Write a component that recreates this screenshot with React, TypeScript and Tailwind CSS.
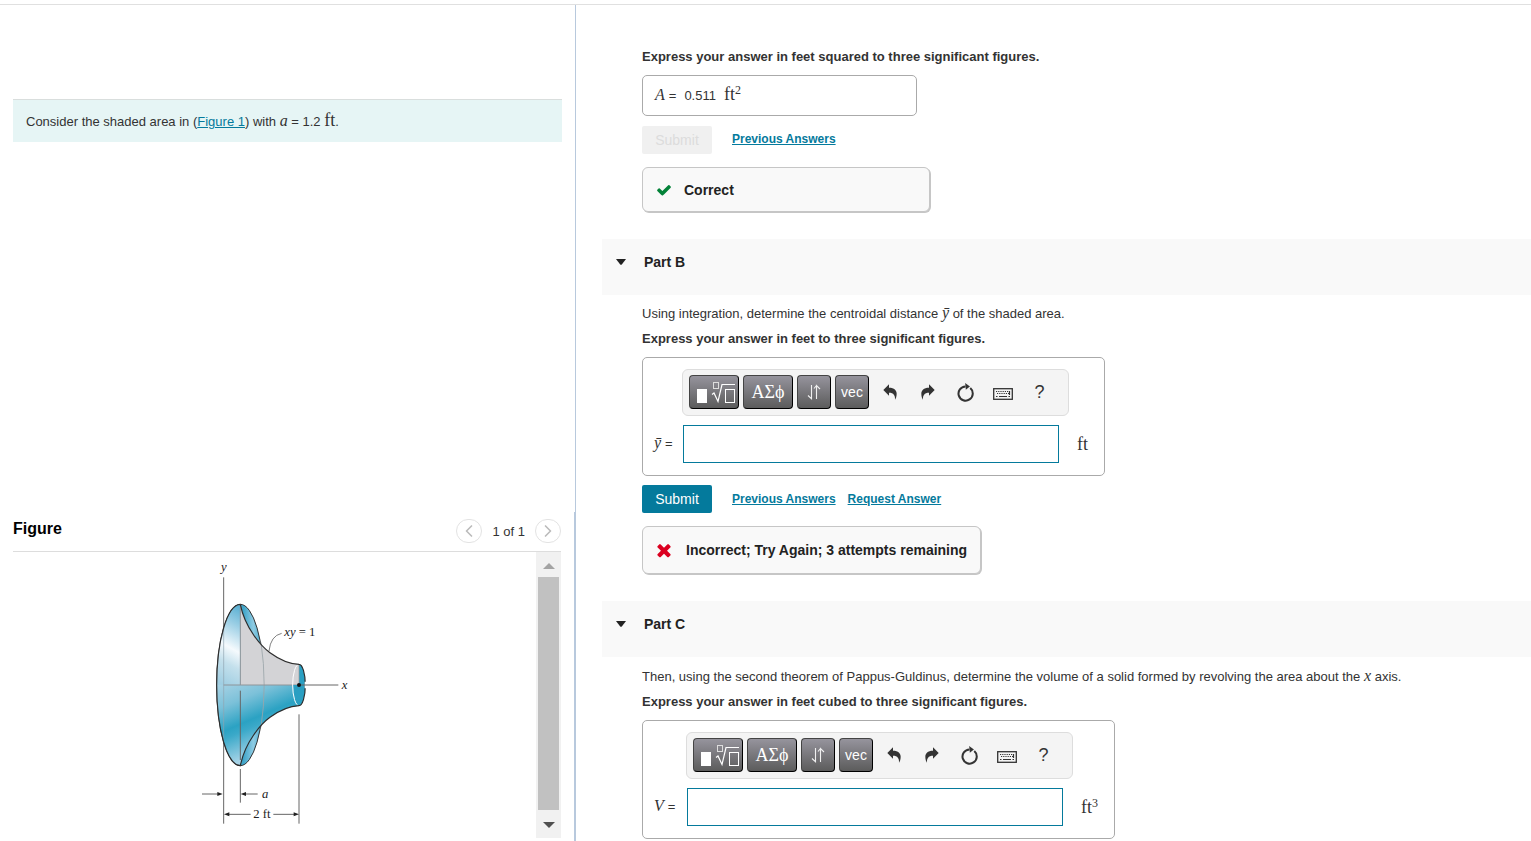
import React, { useState } from 'react';
import { ChevronLeft, ChevronRight } from 'lucide-react';

const linkClass = 'text-[#047a9c] underline';
const mathClass = "font-['Liberation_Serif',serif]";

function CheckIcon() {
  return (
    <svg viewBox="0 0 1792 1792" className="w-4 h-4 fill-[#038238]" aria-hidden="true">
      <path d="M1671 566q0 40-28 68l-724 724-136 136q-28 28-68 28t-68-28l-136-136-362-362q-28-28-28-68t28-68l136-136q28-28 68-28t68 28l294 295 656-657q28-28 68-28t68 28l136 136q28 28 28 68z" />
    </svg>
  );
}

function CrossIcon() {
  return (
    <svg viewBox="0 0 1792 1792" className="w-5 h-5 fill-[#db0020]" aria-hidden="true">
      <path d="M1490 1322q0 40-28 68l-136 136q-28 28-68 28t-68-28l-294-294-294 294q-28 28-68 28t-68-28l-136-136q-28-28-28-68t28-68l294-294-294-294q-28-28-28-68t28-68l136-136q28-28 68-28t68 28l294 294 294-294q28-28 68-28t68 28l136 136q28 28 28 68t-28 68l-294 294 294 294q28 28 28 68z" />
    </svg>
  );
}

function TemplateIcon() {
  return (
    <svg viewBox="0 0 38 24" className="w-[38px] h-6" fill="none" stroke="white" aria-hidden="true">
      <rect x="0" y="9" width="10" height="14" fill="white" stroke="none" />
      <rect x="16.5" y="2.5" width="5" height="6" stroke="#ddd" />
      <path d="M15 14.5l2-1.5 4 8.5 4-17h13" strokeWidth="1.2" />
      <rect x="28.5" y="9.5" width="9" height="13" />
    </svg>
  );
}

function ArrowsIcon() {
  return (
    <svg viewBox="0 0 14 16" className="w-3.5 h-4" fill="none" stroke="#f0f0f0" strokeWidth="1.1" aria-hidden="true">
      <path d="M4.5 1v13.5M1 11.5l3.5 3.2V12M9.5 15V1.5M9.5 4V1.5L13 5M9.5 1.5L7 4.5" />
    </svg>
  );
}

function UndoIcon({ flip = false }: { flip?: boolean }) {
  return (
    <svg viewBox="0 0 42 48" className={`w-3.5 h-4 fill-[#333] ${flip ? '-scale-x-100' : ''}`} aria-hidden="true">
      <path d="M1 18L18 1v10c16 0 23 8 23 18 0 8-2 13-5 18 1-13-4-21-18-21v9z" />
    </svg>
  );
}

function ResetIcon() {
  return (
    <svg viewBox="0 0 50 56" className="w-[17px] h-[19px]" aria-hidden="true">
      <path d="M39 15A21 21 0 1 1 25 10" fill="none" stroke="#333" strokeWidth="6" />
      <path d="M24 0l14 10-12 10z" fill="#333" />
    </svg>
  );
}

function KeyboardIcon() {
  return (
    <svg viewBox="0 0 20 12" className="w-5 h-3" fill="none" stroke="#333" aria-hidden="true">
      <rect x="0.7" y="0.7" width="18.6" height="10.6" strokeWidth="1.3" />
      <path d="M3 3.5h14M4 5.5h12" strokeDasharray="1.2 1" />
      <path d="M3 8.5h1.5M6 8.5h8M15.5 8.5h1.5M16.5 3v4" strokeWidth="1.2" />
    </svg>
  );
}

const darkButton =
  'h-[34px] flex items-center justify-center rounded border border-r-black border-b-black border-t-[#444] border-l-[#444] bg-linear-to-b from-[#96949d] to-[#5c5c5c] text-white';
const iconButton = 'h-[34px] flex items-center justify-center text-[#333]';

function Toolbar() {
  return (
    <div className="w-[387px] h-[47px] flex gap-1 px-1.5 pt-[5px] rounded-md border border-[#ddd] bg-[#f4f4f4]">
      <button className={`${darkButton} w-[50px] pl-[3px]`} aria-label="Templates"><TemplateIcon /></button>
      <button className={`${darkButton} ${mathClass} w-[50px] text-lg`}>ΑΣϕ</button>
      <button className={`${darkButton} w-[34px]`} aria-label="Subscript and superscript"><ArrowsIcon /></button>
      <button className={`${darkButton} w-[34px] text-sm`}>vec</button>
      <button className={`${iconButton} w-[34px]`} aria-label="Undo"><UndoIcon /></button>
      <button className={`${iconButton} w-[34px]`} aria-label="Redo"><UndoIcon flip /></button>
      <button className={`${iconButton} w-[33px]`} aria-label="Reset"><ResetIcon /></button>
      <button className={`${iconButton} w-[33px] pt-1`} aria-label="Keyboard shortcuts"><KeyboardIcon /></button>
      <button className={`${iconButton} w-[33px] text-lg`}>?</button>
    </div>
  );
}

type AnswerFormProps = {
  id: string;
  symbol: string;
  labelClass: string;
  unit: React.ReactNode;
};

function AnswerForm({ id, symbol, labelClass, unit }: AnswerFormProps) {
  const [value, setValue] = useState('');

  return (
    <div className="w-fit mt-[9px] pl-[11px] pr-4 pt-[11px] pb-3 rounded-[5px] border border-[#aaa]">
      <div className="flex">
        <div className={labelClass} />
        <Toolbar />
      </div>
      <div className="flex items-center mt-[9px]">
        <label htmlFor={id} className={`${labelClass} flex items-baseline gap-1 text-[13px]`}>
          <i className={`${mathClass} text-base leading-none`}>{symbol}</i>=
        </label>
        <input
          id={id}
          type="text"
          value={value}
          onChange={(e) => setValue(e.target.value)}
          className="w-[376px] h-[38px] ml-px px-2 border border-[#047a9c] bg-white outline-none"
        />
        <span className={`${mathClass} ml-[18px] text-lg leading-none`}>{unit}</span>
      </div>
    </div>
  );
}

function PartHeader({ title }: { title: string }) {
  return (
    <button className="w-full h-14 mt-[27px] flex items-start gap-[18px] pl-3.5 pt-3.5 bg-[#f9f9f9] text-sm leading-[18px] font-bold text-[#222]">
      <svg viewBox="0 0 10 6" className="w-2.5 h-1.5 mt-1.5 fill-[#222]" aria-hidden="true">
        <path d="M0 0h10L6 5.3q-1 1-2 0z" />
      </svg>
      {title}
    </button>
  );
}

const feedbackClass =
  'flex items-center mt-[13px] rounded-md border border-[#c6c6c6] bg-[#f9f9f9] shadow-[1px_1px_0_0_#c6c6c6] text-sm font-bold text-[#222]';

function FunnelFigure() {
  const thin = { stroke: '#666', strokeWidth: 3 };
  return (
    <svg viewBox="27 0 453 840" className="w-[151px] h-[280px] mx-auto mt-[3px]" role="img" aria-label="Solid of revolution for xy = 1">
      <defs>
        <linearGradient id="disk" x1="150" y1="160" x2="30" y2="380" gradientUnits="userSpaceOnUse">
          <stop offset="0" stopColor="#5fb2d4" />
          <stop offset="0.2" stopColor="#9ccfe5" />
          <stop offset="0.47" stopColor="#f5fafd" />
          <stop offset="0.65" stopColor="#c4e0ec" />
          <stop offset="0.9" stopColor="#a0cee2" />
        </linearGradient>
        <linearGradient id="lower" x1="130" y1="320" x2="240" y2="580" gradientUnits="userSpaceOnUse">
          <stop offset="0.15" stopColor="#a9d3e5" />
          <stop offset="0.4" stopColor="#7cc1d9" />
          <stop offset="0.64" stopColor="#2ba2c3" />
          <stop offset="0.72" stopColor="#3ba9c9" />
          <stop offset="1" stopColor="#a6d3e7" />
        </linearGradient>
        <linearGradient id="back" x1="160" y1="0" x2="220" y2="0" gradientUnits="userSpaceOnUse">
          <stop offset="0" stopColor="#3fa5c9" />
          <stop offset="0.5" stopColor="#8ecbe3" />
          <stop offset="1" stopColor="#3fa5c9" />
        </linearGradient>
      </defs>

      {/* flared end and body */}
      <path d="M101 67V806" {...thin} />
      <ellipse cx="151" cy="390" rx="71" ry="242" fill="url(#back)" stroke="#333" strokeWidth="3" />
      <path d="M151 148A71 242 0 0 0 80 390H151z" fill="url(#disk)" />
      <path d="M80 390A71 242 0 0 0 151 632C165 560 215 505 240 487Q285 454 327 452V390z" fill="url(#lower)" />
      <path d="M151 148C165 220 215 275 240 293Q285 326 327 328V390H151z" fill="#d3d3d6" />
      <path d="M101 218V555" stroke="#8fa5b0" strokeWidth="2" />
      <path d="M213 262Q232 390 213 517" fill="none" stroke="#9aa5aa" strokeWidth="2.5" />
      <path d="M151 150V390M101 390H327" fill="none" stroke="#8e9499" strokeWidth="3" />

      {/* narrow end */}
      <path d="M327 328A19 62 0 0 1 327 452z" fill="#2a9fc2" />
      <path d="M327 390H309A19 62 0 0 0 327 452z" fill="#2a9fc2" />
      <path d="M327 328A19 62 0 0 0 327 452" fill="none" stroke="#fff" strokeWidth="3" />
      <path d="M327 328V390" stroke="#999" strokeWidth="2" />
      <path d="M151 148A71 242 0 0 0 151 632C165 560 215 505 240 487Q285 454 327 452A19 62 0 0 0 327 328Q285 326 240 293C215 275 165 220 151 148" fill="none" stroke="#2d2d2d" strokeWidth="3.5" />
      <path d="M346 380V400" stroke="#fff" strokeWidth="4" />
      <path d="M327 390H445" {...thin} />
      <circle cx="327" cy="390" r="6" fill="#111" />

      {/* curve leader and dimensions */}
      <path d="M237 288Q242 242 275 235" fill="none" {...thin} strokeWidth="2.5" />
      <path d="M151 407V615M151 642V743M327 478V806" {...thin} />
      <path d="M36 717H88M160 717H203M112 778H182M250 778H318" {...thin} />
      <path d="M98 717l-16-6v12zM152 717l16-6v12zM102 778l16-6v12zM327 778l-16-6v12z" fill="#222" />

      <g className="font-['Liberation_Serif',serif]" fill="#222" fontSize="38">
        <text x="93" y="49" fontStyle="italic">y</text>
        <text x="455" y="401" fontStyle="italic">x</text>
        <text x="283" y="242"><tspan fontStyle="italic">xy</tspan> = 1</text>
        <text x="216" y="729" fontStyle="italic">a</text>
        <text x="190" y="788">2 ft</text>
      </g>
    </svg>
  );
}

function FigurePanel() {
  const pager = 'w-[26px] h-6 flex items-center justify-center rounded-full border border-[#e3e3e3] text-[#bbb]';
  return (
    <section className="mt-auto pr-[13px] pb-[3px] border-r border-[#b8c9dd]">
      <div className="flex items-center justify-between h-10 pb-0.5 border-b border-[#ddd]">
        <h2 className="pb-1 text-base font-bold text-black">Figure</h2>
        <div className="flex items-center gap-2.5">
          <button className={pager} aria-label="Previous figure"><ChevronLeft size={20} /></button>
          <span className="pt-0.5">1 of 1</span>
          <button className={pager} aria-label="Next figure"><ChevronRight size={20} /></button>
        </div>
      </div>
      <div className="flex h-[286px]">
        <div className="flex-1 overflow-hidden">
          <FunnelFigure />
        </div>
        <div className="w-[25px] flex flex-col items-center bg-[#f1f1f1]">
          <button className="w-full h-[25px] flex items-center justify-center" aria-label="Scroll up">
            <svg viewBox="0 0 12 6" className="w-3 h-1.5 mt-0.5 fill-[#a3a3a3]"><path d="M0 6L6 0l6 6z" /></svg>
          </button>
          <div className="w-[21px] flex-1 bg-[#c1c1c1]" />
          <button className="w-full h-7 flex items-center justify-center" aria-label="Scroll down">
            <svg viewBox="0 0 12 6" className="w-3 h-1.5 mt-0.5 fill-[#505050]"><path d="M0 0h12L6 6z" /></svg>
          </button>
        </div>
      </div>
    </section>
  );
}

export default function App() {
  return (
    <div className="min-h-screen flex flex-col bg-white font-['Liberation_Sans',Arial,sans-serif] text-[13px] leading-[18px] text-[#333]">
      <div className="h-[5px] border-b border-[#e0e0e0]" />
      <div className="flex flex-1">
        <aside className="w-[576px] shrink-0 flex flex-col pl-[13px] pt-[94px] border-r border-[#b8c9dd]">
          <div className="mr-[13px] h-[43px] flex items-center px-[13px] border-t border-[#d9dedd] bg-[#e6f5f5]">
            <p>
              Consider the shaded area in (<a href="#figure" className={linkClass}>Figure 1</a>) with{' '}
              <i className={`${mathClass} text-base leading-none`}>a</i> = 1.2{' '}
              <span className={`${mathClass} text-lg leading-none`}>ft</span>.
            </p>
          </div>
          <FigurePanel />
        </aside>

        <main className="flex-1 min-w-0 pl-[26px] pt-[43px]">
          <div className="pl-10">
            <p className="font-bold">Express your answer in feet squared to three significant figures.</p>
            <div className="w-[275px] h-[41px] mt-[9px] flex items-baseline px-3 pt-[9px] rounded-[5px] border border-[#aaa]">
              <i className={`${mathClass} mr-1 text-base leading-none`}>A</i>
              <span className="mr-2">=</span>
              <span className="mr-2">0.511</span>
              <span className={`${mathClass} text-lg leading-none`}>ft<sup className="text-xs leading-none">2</sup></span>
            </div>
            <div className="flex items-center gap-5 mt-2.5">
              <button disabled className="w-[70px] h-7 rounded-xs bg-[#f0f0f0] text-sm text-[#dcdcdc]">Submit</button>
              <a href="#previous" className={`${linkClass} pb-0.5 text-xs font-bold`}>Previous Answers</a>
            </div>
            <div className={`${feedbackClass} w-[288px] h-[45px] pl-[13px] gap-3`}>
              <CheckIcon />
              Correct
            </div>
          </div>

          <PartHeader title="Part B" />
          <div className="pl-10 pt-2.5">
            <p>
              Using integration, determine the centroidal distance <i className={`${mathClass} text-base leading-none`}>ȳ</i> of the shaded area.
            </p>
            <p className="mt-[7px] font-bold">Express your answer in feet to three significant figures.</p>
            <AnswerForm id="y-bar" symbol="ȳ" labelClass="w-7" unit="ft" />
            <div className="flex items-center mt-[9px] text-xs font-bold">
              <button className="w-[70px] h-7 mr-5 rounded-xs bg-[#047a9c] text-sm font-normal text-white">Submit</button>
              <a href="#previous" className={`${linkClass} mr-3`}>Previous Answers</a>
              <a href="#request" className={linkClass}>Request Answer</a>
            </div>
            <div className={`${feedbackClass} w-fit h-12 pl-[11px] pr-[13px] gap-3`}>
              <CrossIcon />
              Incorrect; Try Again; 3 attempts remaining
            </div>
          </div>

          <PartHeader title="Part C" />
          <div className="pl-10 pt-[11px]">
            <p>
              Then, using the second theorem of Pappus-Guldinus, determine the volume of a solid formed by revolving the area about the{' '}
              <i className={`${mathClass} text-base leading-none`}>x</i> axis.
            </p>
            <p className="mt-[7px] font-bold">Express your answer in feet cubed to three significant figures.</p>
            <AnswerForm id="volume" symbol="V" labelClass="w-8" unit={<>ft<sup className="text-xs leading-none">3</sup></>} />
          </div>
        </main>
      </div>
    </div>
  );
}
